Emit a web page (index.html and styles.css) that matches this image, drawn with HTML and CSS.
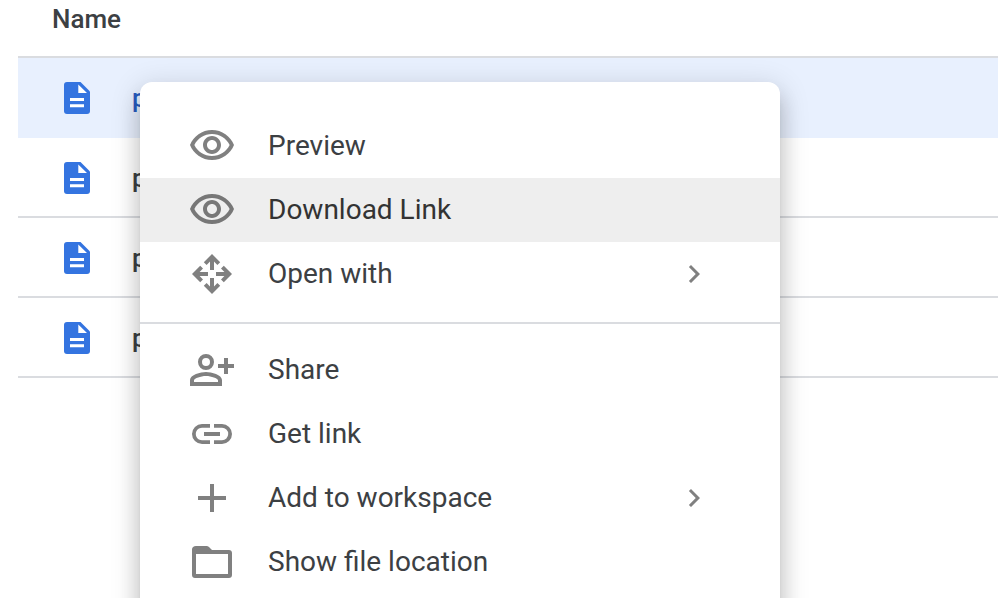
FILE: index.html
```html
<!DOCTYPE html>
<html lang="en">
<head>
<meta charset="utf-8">
<title>Files</title>
<link rel="stylesheet" href="styles.css">
</head>
<body>
<svg class="sprite" aria-hidden="true">
  <symbol id="doc" viewBox="0 0 26 32">
    <path class="doc-page" d="M3 0h13.500L26 9.500V29a3 3 0 0 1-3 3H3a3 3 0 0 1-3-3V3a3 3 0 0 1 3-3z"/>
    <path class="doc-mark" d="M14.300 2.500V11H23zM6 16h14v3H6zM6 22.300h14v3H6z"/>
  </symbol>
  <symbol id="eye" viewBox="0 0 24 24"><path d="M12 6c3.790 0 7.170 2.130 8.820 5.500C19.170 14.870 15.790 17 12 17s-7.170-2.130-8.820-5.500C4.830 8.130 8.210 6 12 6m0-2C7 4 2.730 7.110 1 11.500 2.730 15.890 7 19 12 19s9.270-3.110 11-7.500C21.270 7.110 17 4 12 4zm0 5c1.380 0 2.500 1.120 2.500 2.500S13.380 14 12 14s-2.500-1.120-2.500-2.500S10.620 9 12 9m0-2c-2.480 0-4.500 2.020-4.500 4.500S9.520 16 12 16s4.500-2.020 4.500-4.500S14.480 7 12 7z"/></symbol>
  <symbol id="arrows" viewBox="0 0 48 48">
    <path d="M24 4l-8.200 8.200 2.800 2.800 3.400-3.400V20h4v-8.400l3.400 3.400 2.800-2.800z"/>
    <path d="M24 44l-8.200-8.200 2.800-2.800 3.400 3.400V28h4v8.400l3.400-3.400 2.800 2.800z"/>
    <path d="M4 24l8.200-8.200 2.800 2.800-3.400 3.400H20v4h-8.400l3.400 3.400-2.800 2.800z"/>
    <path d="M44 24l-8.200-8.200-2.800 2.800 3.400 3.400H28v4h8.400l-3.400 3.400 2.800 2.800z"/>
  </symbol>
  <symbol id="share" viewBox="0 0 24 24"><path fill-rule="evenodd" d="M9 4a4 4 0 1 0 0 8 4 4 0 0 0 0-8zm0 2a2 2 0 1 1 0 4 2 2 0 0 1 0-4zM9 13c-2.670 0-8 1.340-8 4v3h16v-3c0-2.660-5.330-4-8-4zm6 5H3v-1c.2-.7 3.300-2 6-2s5.800 1.300 6 2zM18 6h2v3h3v2h-3v3h-2v-3h-3V9h3z"/></symbol>
  <symbol id="link" viewBox="0 0 24 24"><path d="M3.900 12c0-1.710 1.390-3.100 3.100-3.100h4V7H7a5 5 0 0 0 0 10h4v-1.900H7c-1.710 0-3.100-1.390-3.100-3.100zM8 13h8v-2H8zm9-6h-4v1.900h4a3.100 3.100 0 0 1 0 6.200h-4V17h4a5 5 0 0 0 0-10z"/></symbol>
  <symbol id="plus" viewBox="0 0 24 24"><path d="M11 5h2v6h6v2h-6v6h-2v-6H5v-2h6z"/></symbol>
  <symbol id="folder" viewBox="0 0 24 24"><path fill-rule="evenodd" d="M20.500 6H12l-1.500-1.500C10.200 4.200 9.700 4 9.200 4H4c-1.200 0-2 .7-2 1.600v12.900c0 .9.600 1.500 1.500 1.500h17c.9 0 1.500-.6 1.500-1.500v-11c0-.9-.6-1.500-1.500-1.500zM20 18H4V8h16z"/></symbol>
  <symbol id="chevron" viewBox="0 0 24 24"><path d="M8.590 16.590L13.170 12 8.590 7.410 10 6l6 6-6 6z"/></symbol>
</svg>

<main class="files">
  <table class="file-table">
    <thead>
      <tr><th colspan="2" scope="col">Name</th></tr>
    </thead>
    <tbody>
      <tr class="selected"><td class="type"><svg class="doc-icon"><use href="#doc"/></svg></td><td>p</td></tr>
      <tr><td class="type"><svg class="doc-icon"><use href="#doc"/></svg></td><td>p</td></tr>
      <tr><td class="type"><svg class="doc-icon"><use href="#doc"/></svg></td><td>p</td></tr>
      <tr><td class="type"><svg class="doc-icon"><use href="#doc"/></svg></td><td>p</td></tr>
    </tbody>
  </table>
</main>

<div class="menu" role="menu">
  <button class="item" role="menuitem"><svg class="icon"><use href="#eye"/></svg><span class="label">Preview</span></button>
  <button class="item active" role="menuitem"><svg class="icon"><use href="#eye"/></svg><span class="label">Download Link</span></button>
  <button class="item" role="menuitem"><svg class="icon"><use href="#arrows"/></svg><span class="label">Open with</span><svg class="chevron"><use href="#chevron"/></svg></button>
  <hr class="divider">
  <button class="item" role="menuitem"><svg class="icon"><use href="#share"/></svg><span class="label">Share</span></button>
  <button class="item" role="menuitem"><svg class="icon"><use href="#link"/></svg><span class="label">Get link</span></button>
  <button class="item" role="menuitem"><svg class="icon"><use href="#plus"/></svg><span class="label">Add to workspace</span><svg class="chevron"><use href="#chevron"/></svg></button>
  <button class="item" role="menuitem"><svg class="icon"><use href="#folder"/></svg><span class="label">Show file location</span></button>
</div>
</body>
</html>
```
FILE: styles.css
```css
* {
  box-sizing: border-box;
}

body {
  position: relative;
  margin: 0;
  min-height: 100vh;
  overflow: hidden;
  background: #fff;
  color: #3c4043;
  font-family: Roboto, "Liberation Sans", sans-serif;
}

.sprite {
  position: absolute;
  width: 0;
  height: 0;
}

.files {
  padding-left: 18px;
}

.file-table {
  width: 100%;
  border-collapse: separate;
  border-spacing: 0;
}

th,
td {
  padding: 0;
  border-bottom: 2px solid #dadce0;
  text-align: left;
  font-size: 26px;
  font-weight: 500;
  line-height: 32px;
}

th {
  height: 58px;
  padding: 0 0 18px 34px;
}

td {
  height: 80px;
  padding-top: 2px;
}

.type {
  width: 114px;
  padding-left: 46px;
}

.selected td {
  background: #e8f0fe;
  border-bottom-color: #e8f0fe;
  color: #285bbf;
}

.doc-icon {
  display: block;
  width: 26px;
  height: 32px;
}

.doc-page {
  fill: #3474e0;
}

.doc-mark {
  fill: #fff;
}

.menu {
  position: absolute;
  top: 82px;
  left: 140px;
  width: 640px;
  padding: 32px 0;
  border-radius: 12px;
  background: #fff;
  box-shadow:
    0 10px 10px -6px rgba(0, 0, 0, 0.2),
    0 16px 20px 2px rgba(0, 0, 0, 0.14),
    0 6px 28px 4px rgba(0, 0, 0, 0.12);
}

.item {
  display: flex;
  align-items: center;
  gap: 32px;
  width: 100%;
  height: 64px;
  padding: 0 68px 0 48px;
  border: 0;
  background: none;
  color: #3c4043;
  font: 400 28px/32px Roboto, "Liberation Sans", sans-serif;
  text-align: left;
}

.active {
  background: #eee;
  color: #333;
}

.icon {
  flex: none;
  width: 48px;
  height: 48px;
  fill: #808080;
}

.active .icon {
  fill: #777;
}

.label {
  flex: 1;
}

.chevron {
  flex: none;
  width: 36px;
  height: 36px;
  fill: #808080;
}

.divider {
  height: 2px;
  margin: 16px 0 14px;
  border: 0;
  background: #dadce0;
}
```
